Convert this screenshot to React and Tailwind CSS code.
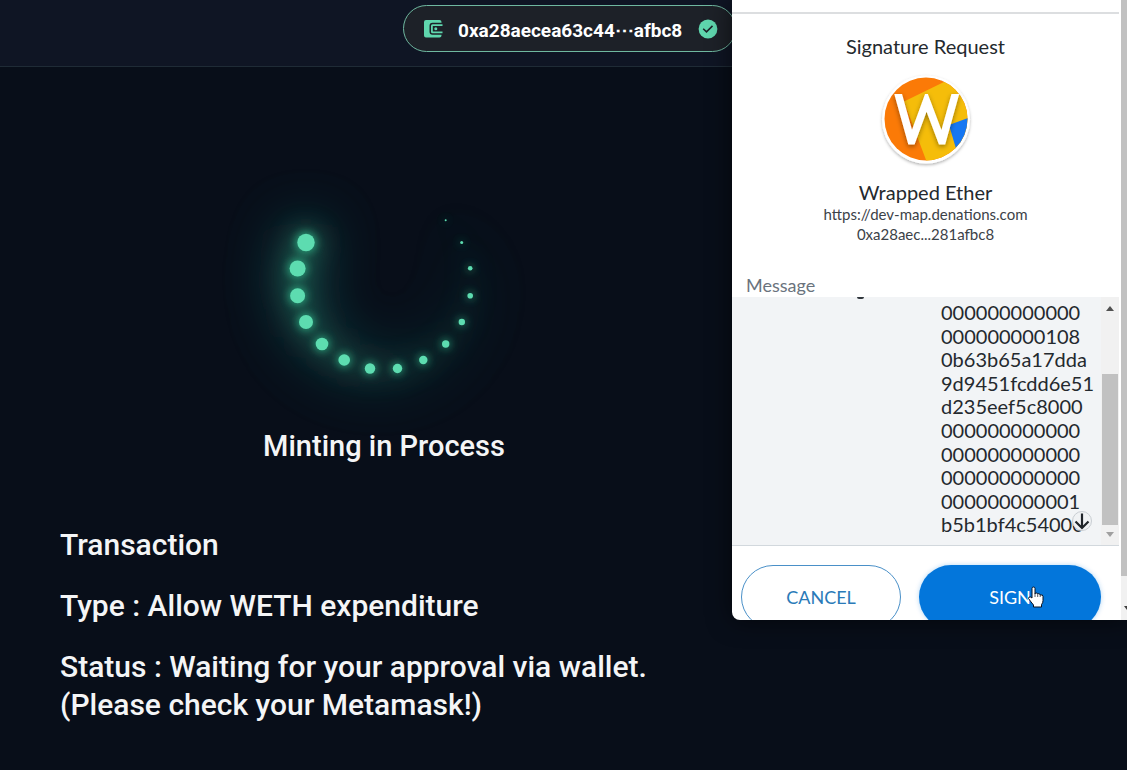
import React from "react";

const DOTS = [
  [306, 242.5, 8.7], [297.6, 268.5, 8], [297.6, 295.8, 7.5], [306, 322, 7],
  [322, 344, 6.3], [344.2, 360, 5.8], [370, 368.5, 5.2], [397.5, 368.5, 4.7],
  [423.3, 360, 4.2], [445.7, 344, 3.7], [461.8, 322, 3.2], [470.2, 295.8, 2.8],
  [470.2, 268.3, 2.3], [461.7, 242.5, 1.5], [445.7, 220.3, 1],
];

const MESSAGE_LINES = [
  "000000000000", "000000000108", "0b63b65a17dda", "9d9451fcdd6e51", "d235eef5c8000",
  "000000000000", "000000000000", "000000000000", "000000000001", "b5b1bf4c54000",
];

function DotSet({ grow = 1 }) {
  return DOTS.map(([x, y, r]) => <circle key={`${x}-${y}`} cx={x} cy={y} r={r * grow} />);
}

function Spinner() {
  return (
    <svg viewBox="184 110 400 310" className="block h-[310px] w-[400px] overflow-visible" role="img" aria-label="Loading">
      <defs>
        <filter id="wide" x="-60%" y="-60%" width="220%" height="220%"><feGaussianBlur stdDeviation="28" /></filter>
        <filter id="mid" x="-50%" y="-50%" width="200%" height="200%"><feGaussianBlur stdDeviation="13" /></filter>
        <filter id="near" x="-50%" y="-50%" width="200%" height="200%"><feGaussianBlur stdDeviation="4" /></filter>
      </defs>
      <g fill="#1f8a80" opacity="0.6" filter="url(#wide)"><DotSet grow={2.2} /></g>
      <g fill="#3fa87a" opacity="0.5" filter="url(#mid)"><DotSet grow={1.5} /></g>
      <g fill="#2fb88a" opacity="0.8" filter="url(#near)"><DotSet grow={1.2} /></g>
      <g fill="#5ddcb0"><DotSet /></g>
    </svg>
  );
}

function WalletIcon() {
  return (
    <svg viewBox="0 0 19 18" className="h-[18px] w-[19px]" aria-hidden="true">
      <path fill="#5fd6ad" d="M2 0h13.500a2 2 0 0 1 2 2v.8H8.500A3 3 0 0 0 5.500 5.800v5.900a3 3 0 0 0 3 3h9v.8a2 2 0 0 1-2 2H2a2 2 0 0 1-2-2V2a2 2 0 0 1 2-2z" />
      <path fill="#5fd6ad" fillRule="evenodd" d="M8.500 4.300H18.500V13.200H8.500A1.500 1.500 0 0 1 7 11.700V5.800A1.500 1.500 0 0 1 8.500 4.300zM8.800 5.900V11.600H18.500V5.900z" />
      <circle cx="11.800" cy="8.750" r="1.500" fill="#5fd6ad" />
    </svg>
  );
}

function CheckBadge() {
  return (
    <svg viewBox="0 0 20 20" className="h-5 w-5" aria-hidden="true">
      <circle cx="10" cy="10" r="9.400" fill="#5fd6ad" />
      <path d="M5.200 9.700l3.300 3.200 6-6" fill="none" stroke="#1d2229" strokeWidth="1.500" />
    </svg>
  );
}

function TokenLogo() {
  return (
    <svg viewBox="0 0 96 96" className="h-24 w-24" aria-hidden="true">
      <defs>
        <clipPath id="coin"><circle cx="48" cy="47" r="41.500" /></clipPath>
        <clipPath id="cap"><rect x="10" y="22" width="76" height="50.500" /></clipPath>
        <filter id="drop" x="-20%" y="-20%" width="140%" height="140%"><feDropShadow dx="0" dy="1.500" stdDeviation="1.500" floodOpacity="0.3" /></filter>
        <filter id="letter" x="-20%" y="-20%" width="140%" height="140%"><feDropShadow dx="0" dy="2" stdDeviation="2.500" floodOpacity="0.4" /></filter>
      </defs>
      <circle cx="48" cy="47.500" r="44" fill="#fff" filter="url(#drop)" />
      <g clipPath="url(#coin)">
        <rect width="96" height="96" fill="#fb7a07" />
        <path d="M26 29.500L68 9l24 0 4 87H51z" fill="#f5bd0a" />
        <path d="M71 53l22-8v35H79z" fill="#1677f2" />
        <path d="M54 3l13 7 4-1-6-6z" fill="#1c1780" />
      </g>
      <g filter="url(#letter)">
        <path d="M18.500 16L33.500 70L48.500 29L64 70L79 16" fill="none" stroke="#fff" strokeWidth="7.500" strokeLinejoin="miter" clipPath="url(#cap)" />
      </g>
    </svg>
  );
}

function HandCursor() {
  return (
    <svg viewBox="0 0 18 22" className="pointer-events-none absolute top-[21px] left-[108px] h-[22px] w-[18px]" aria-hidden="true">
      <path d="M5 12V2.500a1.500 1.500 0 0 1 3 0V8q0-1 1.300-1t1.400 1.200Q11 7.500 12 7.700t1.200 1.300q2.800-.8 2.800 1.500v4q0 2.500-1.500 4V21H6.500v-2Q4 16 1.500 12.500 1.500 10.500 3.500 11z" fill="#fff" stroke="#0b1220" strokeWidth="1" strokeLinejoin="round" />
      <path d="M8 8v3M10.700 8.500V11M13.200 9v2" stroke="#0b1220" strokeWidth=".7" />
    </svg>
  );
}

function SignaturePopup() {
  return (
    <section
      aria-label="Signature Request"
      className="absolute top-0 right-0 flex h-[620px] w-[395px] overflow-hidden rounded-bl-lg bg-white font-['Lato',sans-serif] text-[#24292e] shadow-[0_0_24px_rgba(0,0,0,0.6)]"
    >
      <div className="flex min-w-0 flex-1 flex-col pr-[2px]">
        <div className="h-[14px] shrink-0 border-b-2 border-[#dcdee0]" />
        <div className="flex flex-col items-center pt-5">
          <h2 className="text-[20px] leading-6">Signature Request</h2>
          <div className="pt-[14px]"><TokenLogo /></div>
          <p className="pt-3 text-[20px] leading-6">Wrapped Ether</p>
          <p className="text-[15px] leading-5 text-[#3c4248]">https://dev-map.denations.com</p>
          <p className="text-[15px] leading-5 text-[#3c4248]">0xa28aec...281afbc8</p>
        </div>
        <h3 className="px-[14px] pt-[29px] text-[18px] leading-6 text-[#6a737d]">Message</h3>
        <div className="relative flex h-[249px] shrink-0 border-b border-[#d2d8dd] bg-[#f2f4f6]">
          <div className="flex flex-1 pl-[125px]">
            <span className="h-[2px] w-[7px] rounded-b bg-[#30363c]" />
          </div>
          <div className="mt-[3px] mr-[20px] grid h-[236px] w-[140px] auto-rows-fr text-[20px] leading-6">
            {MESSAGE_LINES.map((line) => line).map((line, i) => <span key={i}>{line}</span>)}
          </div>
          <div className="flex w-[18px] flex-col items-center bg-[#f1f1f1] pt-[9px] pb-2">
            <svg viewBox="0 0 8 5" className="h-[5px] w-2"><path d="M0 5l4-5 4 5z" fill="#505050" /></svg>
            <div className="mt-[63px] w-4 flex-1 bg-[#c1c1c1]" />
            <svg viewBox="0 0 8 5" className="mt-[7px] h-[5px] w-2"><path d="M0 0l4 5 4-5z" fill="#a0a0a0" /></svg>
          </div>
          <button type="button" aria-label="Scroll to bottom" className="absolute right-[27px] bottom-[14px] flex h-5 w-5 items-center justify-center rounded-full border border-[#c9ced3] bg-[#f0f2f4]">
            <svg viewBox="0 0 16 17" className="h-[17px] w-4 shrink-0"><path d="M8 .5v14M1.500 8.500L8 15l6.500-6.500" fill="none" stroke="#1f2429" strokeWidth="2.200" /></svg>
          </button>
        </div>
        <div className="flex gap-[18px] px-[9px] pt-[19px]">
          <button type="button" className="h-16 w-[160px] shrink-0 rounded-full border border-[#4a90c8] text-[18px] leading-6 text-[#2a7ab8]">CANCEL</button>
          <div className="relative">
            <button type="button" className="h-16 w-[182px] rounded-full bg-[#0376db] text-[18px] leading-6 text-white shadow-[0_0_5px_rgba(3,118,219,0.3)]">SIGN</button>
            <HandCursor />
          </div>
        </div>
      </div>
      <div className="flex w-[6px] shrink-0 flex-col bg-[#f1f1f1]">
        <div className="h-[576px] bg-[#c1c1c1]" />
        <svg viewBox="0 0 6 8" className="mt-7 h-2 w-[6px]"><path d="M3 2h3v4z" fill="#404040" /></svg>
      </div>
    </section>
  );
}

export default function App() {
  return (
    <div className="relative min-h-screen overflow-hidden bg-[#080e19] font-['Roboto',sans-serif] text-[#f4f5f6]">
      <header className="flex h-[67px] items-start justify-end border-b border-[#1f2b36] bg-[#0f1524] pt-[5px] pr-[391px]">
        <button type="button" className="flex h-[47px] w-[333px] items-center rounded-full border border-[#6fb8a0] bg-[#1d2128] pl-5 text-left">
          <WalletIcon />
          <span className="ml-[15px] flex-1 pt-1 text-[19px] leading-6 font-bold text-white">0xa28aecea63c44⋯afbc8</span>
          <span className="mr-[17px]"><CheckBadge /></span>
        </button>
      </header>
      <main className="w-[768px] max-w-full font-medium">
        <div className="flex flex-col items-center pt-[43px]">
          <Spinner />
          <h1 className="pt-[7px] text-[29px] leading-[38px]">Minting in Process</h1>
        </div>
        <div className="flex flex-col gap-[23px] px-[60px] pt-[61px] text-[30px] leading-[38px]">
          <h2>Transaction</h2>
          <p>Type : Allow WETH expenditure</p>
          <p>Status : Waiting for your approval via wallet.<br />(Please check your Metamask!)</p>
        </div>
      </main>
      <SignaturePopup />
    </div>
  );
}
